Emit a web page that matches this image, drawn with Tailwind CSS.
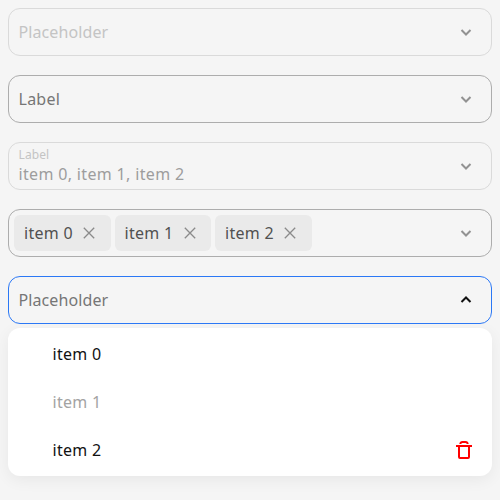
<!DOCTYPE html>
<html lang="en">
<head>
<meta charset="utf-8">
<title>Select</title>
<script src="https://cdn.jsdelivr.net/npm/@tailwindcss/browser@4"></script>
</head>
<body class="h-[500px] overflow-hidden bg-[#f5f5f5] p-2 font-['Noto_Sans',sans-serif] text-base leading-6 text-[#767676]">
<div class="flex flex-col gap-[19px]">
  <div class="flex h-12 items-center justify-between rounded-[12px] border border-[#dadada] pr-[19px] pl-[9.5px]">
    <span class="tracking-[0.1px] text-[#c4c4c4]">Placeholder</span>
    <svg class="h-3 w-3" viewBox="0 0 12 12" fill="none" stroke="#929292" stroke-width="2"><path d="M1.500 4 6 8.500l4.500-4.500"/></svg>
  </div>
  <div class="flex h-12 items-center justify-between rounded-[12px] border border-[#adadad] pr-[19px] pl-[9.5px]">
    <span class="tracking-[0.25px]">Label</span>
    <svg class="h-3 w-3" viewBox="0 0 12 12" fill="none" stroke="#929292" stroke-width="2"><path d="M1.500 4 6 8.500l4.500-4.500"/></svg>
  </div>
  <div class="flex h-12 items-center justify-between rounded-[12px] border border-[#dadada] pr-[19px] pl-[9.5px]">
    <div class="flex flex-col pt-px">
      <span class="text-xs leading-[15px] tracking-[0.1px] text-[#c4c4c4]">Label</span>
      <span class="tracking-[0.34px] text-[#9d9d9d]">item 0, item 1, item 2</span>
    </div>
    <svg class="h-3 w-3" viewBox="0 0 12 12" fill="none" stroke="#929292" stroke-width="2"><path d="M1.500 4 6 8.500l4.500-4.500"/></svg>
  </div>
  <div class="flex h-12 items-center justify-between rounded-[12px] border border-[#adadad] pr-[19px] pl-[5px]">
    <div class="flex gap-1 tracking-[0.3px] text-[#515151]">
      <div class="flex h-9 w-[96.5px] items-center rounded-[6px] bg-[#eaeaea] pl-[10px]"><span class="w-[59px]">item 0</span><svg class="h-3 w-3" viewBox="0 0 12 12" fill="none" stroke="#8a8a8a" stroke-width="1.300"><path d="m.8.8 10.400 10.400m0-10.400L.8 11.200"/></svg></div>
      <div class="flex h-9 w-[96.5px] items-center rounded-[6px] bg-[#eaeaea] pl-[10px]"><span class="w-[59px]">item 1</span><svg class="h-3 w-3" viewBox="0 0 12 12" fill="none" stroke="#8a8a8a" stroke-width="1.300"><path d="m.8.8 10.400 10.400m0-10.400L.8 11.200"/></svg></div>
      <div class="flex h-9 w-[96.5px] items-center rounded-[6px] bg-[#eaeaea] pl-[10px]"><span class="w-[59px]">item 2</span><svg class="h-3 w-3" viewBox="0 0 12 12" fill="none" stroke="#8a8a8a" stroke-width="1.300"><path d="m.8.8 10.400 10.400m0-10.400L.8 11.200"/></svg></div>
    </div>
    <svg class="h-3 w-3" viewBox="0 0 12 12" fill="none" stroke="#929292" stroke-width="2"><path d="M1.500 4 6 8.500l4.500-4.500"/></svg>
  </div>
  <div class="flex h-12 items-center justify-between rounded-[12px] border border-[#2b78f5] pr-[19px] pl-[9.5px]">
    <span class="tracking-[0.1px]">Placeholder</span>
    <svg class="h-3 w-3" viewBox="0 0 12 12" fill="none" stroke="#111" stroke-width="2"><path d="M1.500 8 6 3.500 10.500 8"/></svg>
  </div>
</div>
<div class="mt-1 rounded-[12px] bg-white py-0.5 tracking-[0.3px] text-[#111] shadow-[0_4px_16px_rgba(0,0,0,0.06)]">
  <div class="flex h-12 items-center pl-[44.5px]">item 0</div>
  <div class="flex h-12 items-center pl-[44.5px] text-[#a3a3a3]">item 1</div>
  <div class="flex h-12 items-center justify-between pr-5 pl-[44.5px]"><span>item 2</span>
    <svg class="h-[18px] w-4" viewBox="0 0 16 18" fill="none" stroke="#ff0000" stroke-width="2"><path d="M0 5h16M3 5v11q0 1 1 1h8q1 0 1-1V5M4.300 3q.2-2 2.200-2h3q2 0 2.200 2"/></svg>
  </div>
</div>
</body>
</html>
